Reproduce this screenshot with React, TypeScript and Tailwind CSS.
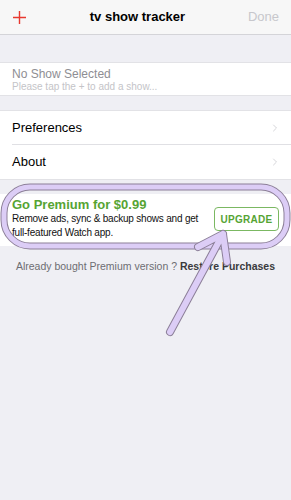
import { ChevronRight } from 'lucide-react';

const font = { fontFamily: '"Liberation Sans", Arial, sans-serif' };

const Row = ({ label, divider }: { label: string; divider?: boolean }) => (
  <div className="relative flex h-[34px] items-center justify-between pl-3 pr-[10px]">
    <span className="text-[13px] text-black">{label}</span>
    <ChevronRight size={12} strokeWidth={1.5} className="text-[#c7c7cc]" />
    {divider && <div className="absolute bottom-0 left-3 right-0 h-px bg-[#e0e0e4]" />}
  </div>
);

const Annotation = () => (
  <svg className="pointer-events-none absolute left-0 top-0" width="291" height="500" viewBox="0 0 291 500">
    <rect x="4" y="187" width="283" height="59" rx="26" fill="none" stroke="#8c7f98" strokeWidth="7" />
    <rect x="4" y="187" width="283" height="59" rx="26" fill="none" stroke="#dccdf6" strokeWidth="5" />
    <path d="M170 332 L223 234 M198 247 L223 234 L227 262" fill="none" stroke="#8c7f98" strokeWidth="8" strokeLinecap="round" strokeLinejoin="round" />
    <path d="M170 332 L223 234 M198 247 L223 234 L227 262" fill="none" stroke="#dccdf6" strokeWidth="6" strokeLinecap="round" strokeLinejoin="round" />
  </svg>
);

export default function App() {
  return (
    <div className="relative h-[500px] w-[291px] overflow-hidden bg-[#efeff4]" style={font}>
      <div className="flex h-[35px] items-center justify-between border-b border-[#d4d4d8] bg-[#f7f7f7] px-3">
        <svg width="15" height="15" viewBox="0 0 15 15">
          <path d="M7.5 1 V14 M1 7.5 H14" stroke="#e8382f" strokeWidth="1.4" />
        </svg>
        <span className="text-[13px] font-bold text-black">tv show tracker</span>
        <span className="text-[13px] text-[#c7c7cc]">Done</span>
      </div>

      <div className="mt-[27px] flex h-[34px] flex-col border-y border-[#e2e2e6] bg-white pl-3 pt-[4px]">
        <span className="text-[12px] leading-[14px] text-[#8e8e93]">No Show Selected</span>
        <span className="text-[10px] leading-[12px] text-[#c4c4c8]">Please tap the + to add a show...</span>
      </div>

      <div className="mt-[14px] border-y border-[#e2e2e6] bg-white">
        <Row label="Preferences" divider />
        <Row label="About" />
      </div>

      <div className="mt-[14px] flex h-[52px] bg-white pl-3 pr-3">
        <div className="w-[200px] pt-[3px]">
          <div className="text-[13px] font-bold leading-[15px] text-[#56a433]">Go Premium for $0.99</div>
          <div className="text-[10px] leading-[14px] tracking-[-0.2px] text-[#111]">
            Remove ads, sync &amp; backup shows and get full-featured Watch app.
          </div>
        </div>
        <div className="ml-auto mt-[13px] flex h-[24px] w-[65px] items-center justify-center rounded border border-[#7bb862] text-[10px] font-bold tracking-[0.3px] text-[#56a433]">
          UPGRADE
        </div>
      </div>

      <div className="mt-[13px] text-center text-[10.5px] text-[#6d6d72]">
        Already bought Premium version ? <span className="font-bold text-[#3a3a3c]">Restore Purchases</span>
      </div>

      <Annotation />
    </div>
  );
}
